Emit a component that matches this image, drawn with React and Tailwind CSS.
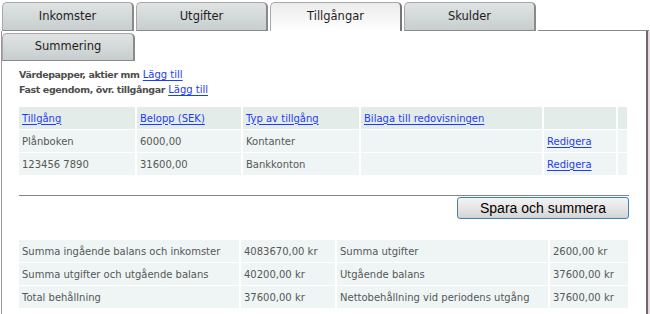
import React from 'react';

const tabs = ['Inkomster', 'Utgifter', 'Tillgångar', 'Skulder'];

const assets = [
    { name: 'Plånboken', amount: '6000,00', type: 'Kontanter' },
    { name: '123456 7890', amount: '31600,00', type: 'Bankkonton' },
];

const summary = [
    ['Summa ingående balans och inkomster', '4083670,00 kr', 'Summa utgifter', '2600,00 kr'],
    ['Summa utgifter och utgående balans', '40200,00 kr', 'Utgående balans', '37600,00 kr'],
    ['Total behållning', '37600,00 kr', 'Nettobehållning vid periodens utgång', '37600,00 kr'],
];

const Link = ({ children }) => (
    <a href="#" className="text-[#1d3cf5] underline underline-offset-2">{children}</a>
);

const Tab = ({ label, active }) => (
    <div
        className={
            active
                ? 'w-[132px] h-[29px] rounded-t-[5px] border border-b-0 border-[#a8a8a8] border-r-2 border-r-[#777] bg-linear-to-b from-[#ebebeb] to-white flex items-center justify-center text-[11.5px] text-[#1e1e1e]'
                : 'w-[132px] h-[29px] rounded-t-[5px] border border-[#a8a8a8] border-r-2 border-r-[#8a8a8a] border-b-[#8a8a8a] bg-linear-to-b from-[#dfe3e3] to-[#c8cecf] flex items-center justify-center text-[11.5px] text-[#1e1e1e]'
        }
    >
        {label}
    </div>
);

export default function App() {
    return (
        <div className="w-[650px] h-[314px] overflow-hidden bg-white text-[#575757] font-['DejaVu_Sans',Verdana,sans-serif]">
            <div className="flex gap-[2px] pl-[2px] pt-[2px]">
                {tabs.map((t) => (
                    <Tab key={t} label={t} active={t === 'Tillgångar'} />
                ))}
                <div className="w-[111px] border-b border-[#8a8a8a]"></div>
            </div>

            <div className="flex">
                <div className="ml-[1px] w-[647px] h-[300px] border-l border-[#9d949b] border-r-2 border-r-[#6a6a6a]">
                    <div className="pt-[2px]">
                        <div className="w-[133px] h-[28px] rounded-t-[5px] border border-[#a8a8a8] border-r-2 border-r-[#8a8a8a] border-b-[#8a8a8a] bg-linear-to-b from-[#dfe3e3] to-[#c8cecf] flex items-center justify-center text-[11.5px] text-[#1e1e1e]">
                            Summering
                        </div>
                    </div>

                    <div className="pl-[17px] pr-[17px] text-[10px]">
                        <div className="mt-[6px] leading-[15px]">
                            <div><span className="font-bold text-[#4d4d4d] text-[9.5px] tracking-[-0.4px]">Värdepapper, aktier mm</span> <Link>Lägg till</Link></div>
                            <div><span className="font-bold text-[#4d4d4d] text-[9.5px] tracking-[-0.4px]">Fast egendom, övr. tillgångar</span> <Link>Lägg till</Link></div>
                        </div>

                        <div className="mt-[10px] grid grid-cols-[116px_104px_116px_181px_72px_9px] gap-x-[2px] gap-y-px">
                            <div className="h-[22px] bg-[#e4ecea] pl-[3px] flex items-center"><Link>Tillgång</Link></div>
                            <div className="h-[22px] bg-[#e4ecea] pl-[3px] flex items-center"><Link>Belopp (SEK)</Link></div>
                            <div className="h-[22px] bg-[#e4ecea] pl-[3px] flex items-center"><Link>Typ av tillgång</Link></div>
                            <div className="h-[22px] bg-[#e4ecea] pl-[3px] flex items-center"><Link>Bilaga till redovisningen</Link></div>
                            <div className="h-[22px] bg-[#e4ecea]"></div>
                            <div className="h-[22px] bg-[#e4ecea]"></div>
                            {assets.map((a) => (
                                <React.Fragment key={a.name}>
                                    <div className="h-[22px] bg-[#eef5f4] pl-[3px] flex items-center">{a.name}</div>
                                    <div className="h-[22px] bg-[#eef5f4] pl-[3px] flex items-center">{a.amount}</div>
                                    <div className="h-[22px] bg-[#eef5f4] pl-[3px] flex items-center">{a.type}</div>
                                    <div className="h-[22px] bg-[#eef5f4]"></div>
                                    <div className="h-[22px] bg-[#eef5f4] pl-[3px] flex items-center"><Link>Redigera</Link></div>
                                    <div className="h-[22px] bg-[#eef5f4]"></div>
                                </React.Fragment>
                            ))}
                        </div>

                        <div className="mt-[20px] w-[610px] h-px bg-[#858585]"></div>

                        <div className="w-[610px] flex justify-end">
                            <button className="mt-px w-[172px] h-[22px] rounded-[3px] border border-[#3c84b8] bg-linear-to-b from-[#f3f3f3] via-[#e6e6e6] to-[#d4d4d4] text-black text-[14px] font-['Liberation_Sans',Arial,sans-serif] leading-none">
                                Spara och summera
                            </button>
                        </div>

                        <div className="mt-[21px] grid grid-cols-[220px_94px_211px_78px] gap-x-[2px] gap-y-px">
                            {summary.map((row, i) =>
                                row.map((cell, j) => (
                                    <div key={`${i}-${j}`} className="h-[22px] bg-[#eef5f4] pl-[3px] flex items-center">
                                        {cell}
                                    </div>
                                ))
                            )}
                        </div>
                    </div>
                </div>
                <div className="w-[2px] h-[300px] bg-linear-to-r from-[#e2cdd9] to-[#efe2ea]"></div>
            </div>
        </div>
    );
}
